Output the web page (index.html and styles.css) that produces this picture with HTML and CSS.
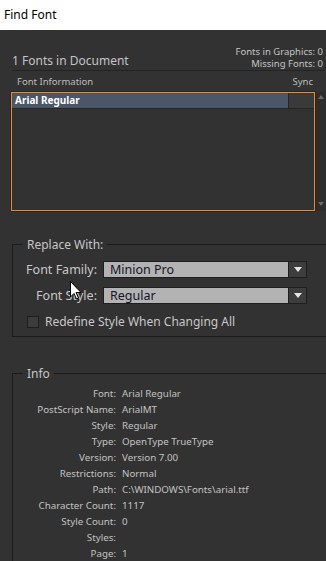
FILE: index.html
```html
<!DOCTYPE html>
<html>
<head>
<meta charset="utf-8">
<link rel="stylesheet" href="styles.css">
</head>
<body>
<div class="titlebar">Find Font</div>
<div class="dialog">
  <div class="doc-head">
    <div class="doc-title">1 Fonts in Document</div>
    <div class="doc-stats">
      <div>Fonts in Graphics: 0</div>
      <div>Missing Fonts: 0</div>
    </div>
  </div>
  <div class="cols"><span>Font Information</span><span class="sync-h">Sync</span></div>
  <div class="list-wrap">
    <div class="list">
      <div class="row sel"><span class="name">Arial Regular</span><span class="sync"></span></div>
    </div>
    <div class="scroll">
      <svg width="8" height="6" viewBox="0 0 8 6"><path d="M4 1 L7 5 L1 5 Z" fill="#6a6a6a"/></svg>
      <svg width="8" height="6" viewBox="0 0 8 6"><path d="M1 1 L7 1 L4 5 Z" fill="#6a6a6a"/></svg>
    </div>
  </div>

  <fieldset class="group replace">
    <legend>Replace With:</legend>
    <div class="field">
      <label>Font Family:</label>
      <div class="select"><span class="val">Minion Pro</span><span class="btn"><svg width="8" height="5" viewBox="0 0 8 5"><path d="M0 0 L8 0 L4 5 Z" fill="#e6e6e6"/></svg></span></div>
    </div>
    <div class="field">
      <label>Font Style:</label>
      <div class="select"><span class="val">Regular</span><span class="btn"><svg width="8" height="5" viewBox="0 0 8 5"><path d="M0 0 L8 0 L4 5 Z" fill="#e6e6e6"/></svg></span></div>
    </div>
    <div class="check"><span class="box"></span><span>Redefine Style When Changing All</span></div>
  </fieldset>

  <fieldset class="group info">
    <legend>Info</legend>
    <div class="info-grid">
      <span class="k">Font:</span><span class="v">Arial Regular</span>
      <span class="k">PostScript Name:</span><span class="v">ArialMT</span>
      <span class="k">Style:</span><span class="v">Regular</span>
      <span class="k">Type:</span><span class="v">OpenType TrueType</span>
      <span class="k">Version:</span><span class="v">Version 7.00</span>
      <span class="k">Restrictions:</span><span class="v">Normal</span>
      <span class="k">Path:</span><span class="v">C:\WINDOWS\Fonts\arial.ttf</span>
      <span class="k">Character Count:</span><span class="v">1117</span>
      <span class="k">Style Count:</span><span class="v">0</span>
      <span class="k">Styles:</span><span class="v"></span>
      <span class="k">Page:</span><span class="v">1</span>
    </div>
  </fieldset>

  <svg class="cursor" width="12" height="19" viewBox="0 0 12 19"><path d="M0.5 0.5 L0.5 16 L4 12.5 L6.5 18 L8.5 17 L6 11.5 L11 11.5 Z" fill="#fff" stroke="#000" stroke-width="1" stroke-linejoin="miter"/></svg>
</div>
</body>
</html>
```
FILE: styles.css
```css
html, body {
  margin: 0;
  padding: 0;
}
body {
  width: 326px;
  height: 561px;
  overflow: hidden;
  font-family: "Noto Sans", "Open Sans", sans-serif;
  background: #333333;
}
.titlebar {
  height: 30px;
  background: #ffffff;
  color: #000;
  font-size: 12px;
  line-height: 30px;
  padding-left: 4px;
}
.dialog {
  position: relative;
  height: 531px;
  background: #323232;
  color: #c6c6c6;
}
.doc-head {
  display: flex;
  justify-content: space-between;
  align-items: flex-end;
  margin-left: 12px;
  padding-top: 15px;
  padding-right: 3px;
  border-bottom: 1px solid #232323;
  height: 25px;
}
.doc-title {
  font-size: 12px;
  line-height: 18px;
  color: #c4c4c4;
}
.doc-stats {
  text-align: right;
  font-size: 9.5px;
  line-height: 11.5px;
  margin-bottom: 1px;
  color: #c4c4c4;
}
.cols {
  display: flex;
  justify-content: space-between;
  font-size: 9.5px;
  line-height: 18px;
  height: 19px;
  padding-top: 2px;
  padding-left: 17px;
  padding-right: 13px;
  color: #bdbdbd;
}
.list-wrap {
  display: flex;
  height: 119px;
  margin-left: 11px;
}
.list {
  flex: 1;
  border: 1px solid #ed8a21;
  background: #323232;
  box-shadow: 0 0 0 1px #262626;
}
.row {
  display: flex;
  height: 15px;
  border-bottom: 1px solid #262626;
}
.row.sel .name {
  flex: 1;
  background: #4b5769;
  color: #ffffff;
  font-weight: bold;
  font-size: 10px;
  line-height: 15px;
  padding-left: 3px;
}
.row .sync {
  width: 25px;
  background: #3a3a3a;
  border-left: 1px solid #262626;
}
.scroll {
  width: 10px;
  margin-left: 1px;
  background: #2d2d2d;
  display: flex;
  flex-direction: column;
  justify-content: space-between;
  align-items: center;
  padding: 2px 0 4px;
}
.group {
  margin: 0 0 0 12px;
  padding: 0;
  border: none;
  border-top: 1px solid #1b1b1b;
  border-left: 1px solid #1b1b1b;
  min-width: 0;
}
.group legend {
  margin-left: 10px;
  padding: 0 4px;
  font-size: 12px;
  color: #c6c6c6;
}
.replace {
  margin-top: 25px;
  border-bottom: 1px solid #1b1b1b;
  height: 101px;
  box-sizing: border-box;
}
.field {
  display: flex;
  align-items: center;
  margin-top: 8px;
}
.field + .field {
  margin-top: 9px;
}
.field label {
  width: 84px;
  text-align: right;
  font-size: 12.5px;
  padding-right: 6px;
  color: #c8c8c8;
}
.select {
  display: flex;
  height: 17px;
}
.select .val {
  background: #b3b3b3;
  border: 1px solid #1e1e1e;
  color: #14142a;
  font-size: 12.5px;
  line-height: 15px;
  padding-left: 6px;
  box-sizing: border-box;
  width: 186px;
}
.select .btn {
  width: 18px;
  background: #3d3d3d;
  border: 1px solid #1e1e1e;
  border-left: none;
  box-sizing: border-box;
  display: flex;
  align-items: center;
  justify-content: center;
}
.check {
  display: flex;
  align-items: center;
  margin-top: 9px;
  margin-left: 14px;
  font-size: 12px;
  color: #c8c8c8;
}
.check .box {
  width: 10px;
  height: 10px;
  background: #3c3c3c;
  border: 1px solid #1e1e1e;
  margin-right: 6px;
}
.info {
  margin-top: 28px;
  height: 200px;
}
.info-grid {
  display: grid;
  grid-template-columns: 103px 1fr;
  column-gap: 6px;
  font-size: 9.75px;
  line-height: 16px;
  margin-top: 4px;
  color: #c2c2c2;
}
.info-grid .k {
  text-align: right;
}
.cursor {
  position: absolute;
  left: 70px;
  top: 251px;
}
```
